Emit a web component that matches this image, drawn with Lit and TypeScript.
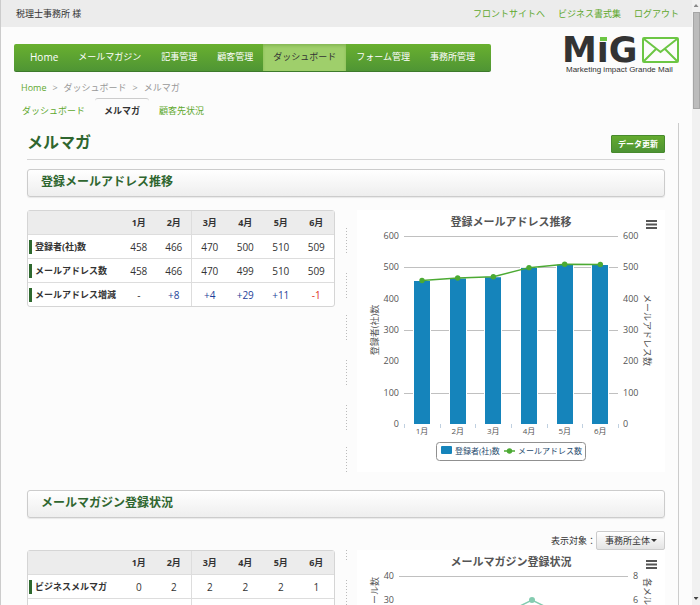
import { LitElement, html, svg, css } from "lit";
import { customElement, property } from "lit/decorators.js";
import { classMap } from "lit/directives/class-map.js";

const MONTHS = ["1月", "2月", "3月", "4月", "5月", "6月"];

interface Row {
  label: string;
  values: string[];
}

const ADDRESS_ROWS: Row[] = [
  { label: "登録者(社)数", values: ["458", "466", "470", "500", "510", "509"] },
  { label: "メールアドレス数", values: ["458", "466", "470", "499", "510", "509"] },
  { label: "メールアドレス増減", values: ["-", "+8", "+4", "+29", "+11", "-1"] },
];

const MAGAZINE_ROWS: Row[] = [
  { label: "ビジネスメルマガ", values: ["0", "2", "2", "2", "2", "1"] },
  { label: "", values: ["", "", "", "", "", ""] },
];

@customElement("mig-logo")
export class MigLogo extends LitElement {
  static styles = css`
    :host { display: block; width: 115px; flex: none; }
    svg { display: block; width: 100%; overflow: visible; }
    .mark { font: bold 35px "DejaVu Sans", sans-serif; fill: #333; }
    .mask { fill: #fcfcfc; }
    .dot { fill: #6cc644; }
    .envelope { fill: none; stroke: #6cc644; stroke-width: 2; }
    .tagline { font: 8px "Liberation Sans", sans-serif; fill: #333; }
  `;
  render() {
    return html`<svg viewBox="0 0 115 38" role="img" aria-label="MiG Marketing impact Grande Mail">
      <text class="mark" x="-2" y="26">MiG</text>
      <rect class="mask" x="35" y="-2" width="9" height="8" />
      <rect class="dot" x="36" y="1" width="7" height="4" />
      <rect class="envelope" x="79" y="2" width="35" height="24" rx="1" />
      <path class="envelope" d="M80 3 L96.5 16 L113 3 M80 25 L92 13 M113 25 L101 13" />
      <text class="tagline" x="2" y="36">Marketing impact Grande Mail</text>
    </svg>`;
  }
}

@customElement("month-table")
export class MonthTable extends LitElement {
  @property({ attribute: false }) rows: Row[] = [];
  @property() name = "";

  static styles = css`
    :host { display: block; }
    table {
      width: 100%;
      table-layout: fixed;
      border-collapse: separate;
      border-spacing: 0;
      border: 1px solid #d5d5d5;
      border-radius: 3px;
      background: #fff;
      color: #333;
      font-size: 9px;
      line-height: 14px;
    }
    th, td { height: 23px; padding: 0; border-bottom: 1px solid #ddd; text-align: center; }
    thead th, thead td { background: #ececec; }
    tbody tr:last-child > * { border-bottom: 0; }
    .name { width: 93px; }
    .split { border-right: 1px solid #ddd; }
    .label { display: block; height: 14px; margin-left: 1px; padding-left: 3px; text-align: left; white-space: nowrap; }
    .marked { border-left: 3px solid #2f692f; }
    td { font-size: 10px; }
    .up { color: #1f3f9a; }
    .down { color: #e0301e; }
  `;
  render() {
    return html`<table aria-label=${this.name}>
      <thead>
        <tr>
          <td class="name"></td>
          ${MONTHS.map((m, i) => html`<th scope="col" class=${classMap({ split: i === 1 })}>${m}</th>`)}
        </tr>
      </thead>
      <tbody>
        ${this.rows.map((r) => html`<tr>
          <th scope="row"><span class=${classMap({ label: true, marked: r.label !== "" })}>${r.label}</span></th>
          ${r.values.map((v, i) => html`<td class=${classMap({
            split: i === 1,
            up: v.startsWith("+"),
            down: v.startsWith("-") && v.length > 1,
          })}>${v}</td>`)}
        </tr>`)}
      </tbody>
    </table>`;
  }
}

const chartFrame = css`
  :host { display: block; position: relative; background: #fff; }
  svg { display: block; width: 100%; }
  text { fill: #555; font-size: 9px; }
  .title { font-size: 11px; font-weight: bold; text-anchor: middle; }
  .end { text-anchor: end; }
  .mid { text-anchor: middle; }
  .small { font-size: 8px; }
  .grid { stroke: #c0c0c0; stroke-width: 1; }
  .tick { stroke: #c0d0e0; stroke-width: 1; }
  .menu {
    position: absolute;
    top: 6px;
    right: 4px;
    width: 19px;
    height: 16px;
    padding: 4px;
    border: 0;
    background: none;
  }
  .menu svg { width: 11px; }
  .menu path { stroke: #555; stroke-width: 2; }
`;

const menuButton = html`<button class="menu" aria-label="メニュー">
  <svg viewBox="0 0 11 9"><path d="M0 1H11M0 4.5H11M0 8H11" /></svg>
</button>`;

@customElement("address-chart")
export class AddressChart extends LitElement {
  static styles = [chartFrame, css`
    .bar { fill: #1584bb; stroke: #fff; stroke-width: 1; }
    .swatch { fill: #1584bb; }
    .line { fill: none; stroke: #4caa33; stroke-width: 1.5; }
    .point { fill: #4caa33; }
    .legend { fill: #fff; stroke: #909090; }
    .key { fill: #274b6d; font-size: 8px; }
  `];
  private x(i: number) { return 65 + (i * 107) / 3; }
  private y(v: number) { return 214 - (v * 188) / 600; }
  render() {
    const bars = ADDRESS_ROWS[0].values.map(Number);
    const line = ADDRESS_ROWS[1].values.map(Number);
    return html`<svg viewBox="0 0 308 262">
      <text class="title" x="154" y="16">登録メールアドレス推移</text>
      ${[600, 500, 300, 100].map((v) => svg`<line class="grid" x1="47" x2="261" y1=${Math.round(this.y(v)) + 0.5} y2=${Math.round(this.y(v)) + 0.5} />`)}
      ${[0, 100, 200, 300, 400, 500, 600].map((v) => svg`
        <text class="end" x="42" y=${Math.round(this.y(v)) + 3}>${v}</text>
        <text x="266" y=${Math.round(this.y(v)) + 3}>${v}</text>`)}
      ${[0, 1, 2, 3, 4, 5, 6].map((i) => svg`<line class="tick" x1=${Math.round(47 + (i * 107) / 3) + 0.5} x2=${Math.round(47 + (i * 107) / 3) + 0.5} y1="214" y2="218" />`)}
      ${bars.map((v, i) => svg`
        <rect class="bar" x=${Math.round(this.x(i)) - 8.5} width="17" y=${this.y(v)} height=${214.5 - this.y(v)} />
        <text class="mid small" x=${this.x(i)} y="224">${MONTHS[i]}</text>`)}
      <polyline class="line" points=${line.map((v, i) => `${this.x(i)},${this.y(v)}`).join(" ")} />
      ${line.map((v, i) => svg`<circle class="point" cx=${this.x(i)} cy=${this.y(v)} r="2.7" />`)}
      <text class="mid" transform="translate(21 120) rotate(-90)">登録者(社)数</text>
      <text class="mid" transform="translate(287 120) rotate(90)">メールアドレス数</text>
      <rect class="legend" x="79.5" y="232.5" width="149" height="18" rx="3" />
      <rect class="swatch" x="84" y="236" width="11" height="8" rx="1" />
      <text class="key" x="98" y="244">登録者(社)数</text>
      <line class="line" x1="147" x2="158" y1="241" y2="241" />
      <circle class="point" cx="152.5" cy="241" r="2.7" />
      <text class="key" x="161" y="244">メールアドレス数</text>
    </svg>${menuButton}`;
  }
}

@customElement("magazine-chart")
export class MagazineChart extends LitElement {
  static styles = [chartFrame, css`
    .trend { fill: none; stroke: #84ccb0; stroke-width: 1.5; }
    .node { fill: #84ccb0; }
  `];
  render() {
    return html`<svg viewBox="0 0 308 262">
      <text class="title" x="154" y="16">メールマガジン登録状況</text>
      <line class="grid" x1="42" x2="271" y1="26.5" y2="26.5" />
      <text class="end" x="37" y="29">40</text>
      <text class="end" x="37" y="53">30</text>
      <text x="276" y="29">8</text>
      <text x="276" y="53">6</text>
      <text class="end" transform="translate(21 27) rotate(-90)">メール数</text>
      <text transform="translate(287 28) rotate(90)">各メルマガ</text>
      <polyline class="trend" points="137,69 175,50 213,69" />
      <circle class="node" cx="175" cy="50" r="3" />
    </svg>${menuButton}`;
  }
}

@customElement("app-root")
export class AppRoot extends LitElement {
  static styles = css`
    :host {
      display: flex;
      height: 100vh;
      overflow: hidden;
      font-family: "Open Sans", "Noto Sans CJK JP", sans-serif;
      font-size: 9px;
      line-height: 16px;
      color: #333;
      background: #fcfcfc;
    }
    * { box-sizing: border-box; }
    button, select { font-family: inherit; }
    a { color: #5fa82e; text-decoration: none; }
    .page { flex: 1; min-width: 0; border-left: 1px solid #ccc; }
    .account { display: flex; justify-content: space-between; align-items: center; height: 27px; padding: 0 13px 0 15px; background: #ececec; }
    .account nav { display: flex; gap: 13px; }
    .masthead { display: flex; justify-content: space-between; align-items: flex-end; height: 47px; padding: 0 13px; }
    .menu {
      display: flex;
      height: 28px;
      margin-bottom: 2px;
      padding: 0 6px;
      border-bottom: 1px solid #3d7a2c;
      border-radius: 2px;
      background: linear-gradient(#69b02f, #4f9534);
    }
    .menu a { padding: 0 10px; line-height: 26px; color: #fff; white-space: nowrap; }
    .menu .home { font-size: 10px; }
    .menu .current { background: #9fcf6b; color: #333; box-shadow: inset 0 2px 3px #86b854; }
    .crumbs { display: flex; gap: 6px; margin-top: 6px; padding-left: 20px; color: #999; }
    .tabs { display: flex; gap: 1px; margin-top: 2px; padding-left: 12px; }
    .tabs a { height: 25px; padding: 0 9px; border-top: 1px solid transparent; line-height: 23px; }
    .tabs .current { border-color: #ccc; border-radius: 3px 3px 0 0; color: #333; font-weight: bold; }
    .panel { margin-right: 13px; padding: 0 13px 20px 26px; border-right: 1px solid #ccc; }
    .heading { display: flex; justify-content: space-between; align-items: flex-end; height: 37px; border-bottom: 1px solid #d5d5d5; }
    h1 { margin: 0; font-size: 16px; line-height: 34px; color: #2f662f; }
    .refresh {
      height: 18px;
      margin-bottom: 6px;
      padding: 0 6px;
      border: 1px solid #478a2d;
      border-radius: 1px;
      background: linear-gradient(#64ab2f, #4c9233);
      color: #fff;
      font-size: 8px;
      font-weight: bold;
      line-height: 16px;
    }
    h2 {
      height: 28px;
      margin: 9px 0 13px;
      padding: 0 13px;
      border: 1px solid #ccc;
      border-radius: 3px;
      background: linear-gradient(#fff, #eee);
      box-shadow: 0 1px 1px #e8e8e8;
      font-size: 12px;
      line-height: 24px;
      color: #2f662f;
    }
    .columns { display: grid; grid-template-columns: 1fr 22px 1fr; margin-bottom: 18px; }
    .divider {
      justify-self: center;
      width: 1px;
      background: repeating-linear-gradient(#bbb 0 1px, transparent 1px 3px);
      mask: repeating-linear-gradient(transparent 0 17px, #000 17px 44px);
    }
    .second .divider { mask-position: 0 12px; }
    .filter { display: flex; justify-content: flex-end; align-items: center; }
    .picker { display: flex; align-items: center; position: relative; }
    .filter select {
      appearance: none;
      height: 19px;
      padding: 0 13px 0 8px;
      border: 1px solid #ccc;
      border-radius: 2px;
      background: linear-gradient(#fff, #e4e4e4);
      color: #333;
      font-size: 9px;
      line-height: 17px;
    }
    .caret { position: absolute; right: 8px; width: 6px; height: 3px; pointer-events: none; background: #333; clip-path: polygon(0 0, 100% 0, 50% 100%); }
    .scroll { display: flex; flex-direction: column; align-items: center; width: 8px; background: #f1f1f1; }
    .thumb { width: 7px; height: 97px; margin: 5px 0 auto 1px; border: 1px solid #a6a6a6; background: #bcbcbc; }
    .arrow { width: 5px; height: 3px; background: #888; }
    .upward { margin-top: 4px; clip-path: polygon(50% 0, 100% 100%, 0 100%); }
    .downward { margin-bottom: 5px; background: #444; clip-path: polygon(0 0, 100% 0, 50% 100%); }
  `;

  render() {
    return html`
      <div class="page">
        <header>
          <div class="account">
            <span>税理士事務所 様</span>
            <nav>
              <a href="#site">フロントサイトへ</a>
              <a href="#forms">ビジネス書式集</a>
              <a href="#logout">ログアウト</a>
            </nav>
          </div>
          <div class="masthead">
            <nav class="menu">
              <a class="home" href="#home">Home</a>
              <a href="#magazine">メールマガジン</a>
              <a href="#articles">記事管理</a>
              <a href="#customers">顧客管理</a>
              <a class="current" href="#dashboard">ダッシュボード</a>
              <a href="#form">フォーム管理</a>
              <a href="#office">事務所管理</a>
            </nav>
            <mig-logo></mig-logo>
          </div>
        </header>
        <nav class="crumbs">
          <a href="#home">Home</a><span>&gt;</span><span>ダッシュボード</span><span>&gt;</span><span>メルマガ</span>
        </nav>
        <nav class="tabs">
          <a href="#dashboard">ダッシュボード</a>
          <a class="current" href="#mailmag">メルマガ</a>
          <a href="#status">顧客先状況</a>
        </nav>
        <main class="panel">
          <div class="heading">
            <h1>メルマガ</h1>
            <button class="refresh">データ更新</button>
          </div>
          <section>
            <h2>登録メールアドレス推移</h2>
            <div class="columns">
              <month-table name="登録メールアドレス推移" .rows=${ADDRESS_ROWS}></month-table>
              <div class="divider"></div>
              <address-chart></address-chart>
            </div>
          </section>
          <section class="second">
            <h2>メールマガジン登録状況</h2>
            <div class="filter">
              <label for="target">表示対象：</label>
              <span class="picker">
                <select id="target"><option>事務所全体</option></select>
                <span class="caret"></span>
              </span>
            </div>
            <div class="columns">
              <month-table name="メールマガジン登録状況" .rows=${MAGAZINE_ROWS}></month-table>
              <div class="divider"></div>
              <magazine-chart></magazine-chart>
            </div>
          </section>
        </main>
      </div>
      <div class="scroll" aria-hidden="true">
        <span class="arrow upward"></span>
        <span class="thumb"></span>
        <span class="arrow downward"></span>
      </div>
    `;
  }
}
